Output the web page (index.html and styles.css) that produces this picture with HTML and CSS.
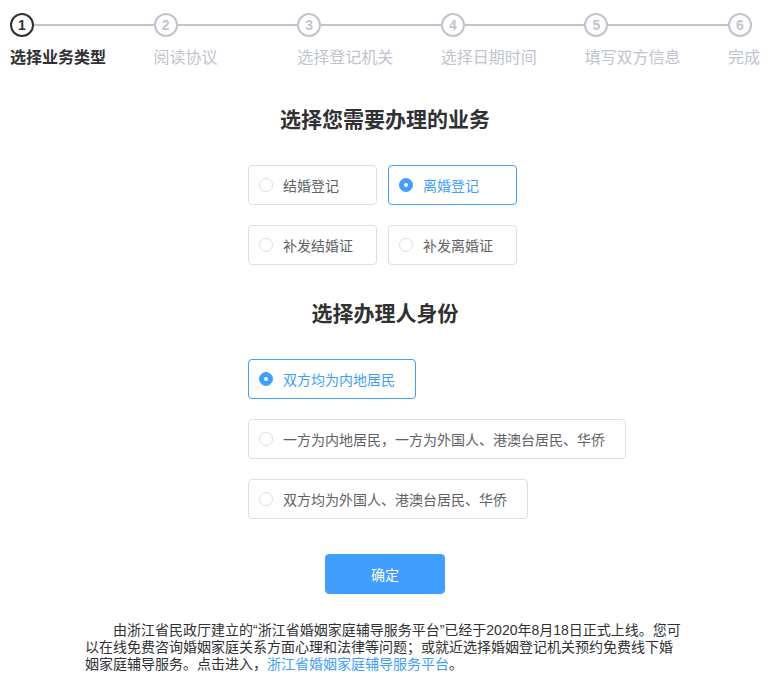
FILE: index.html
```html
<!DOCTYPE html>
<html lang="zh-CN">
<head>
<meta charset="utf-8">
<title>选择业务类型</title>
<link rel="stylesheet" href="styles.css">
</head>
<body>
<div class="steps">
  <div class="step is-process">
    <div class="step-head"><span class="step-icon">1</span><span class="step-line"></span></div>
    <div class="step-title">选择业务类型</div>
  </div>
  <div class="step">
    <div class="step-head"><span class="step-icon">2</span><span class="step-line"></span></div>
    <div class="step-title">阅读协议</div>
  </div>
  <div class="step">
    <div class="step-head"><span class="step-icon">3</span><span class="step-line"></span></div>
    <div class="step-title">选择登记机关</div>
  </div>
  <div class="step">
    <div class="step-head"><span class="step-icon">4</span><span class="step-line"></span></div>
    <div class="step-title">选择日期时间</div>
  </div>
  <div class="step">
    <div class="step-head"><span class="step-icon">5</span><span class="step-line"></span></div>
    <div class="step-title">填写双方信息</div>
  </div>
  <div class="step step-last">
    <div class="step-head"><span class="step-icon">6</span></div>
    <div class="step-title">完成</div>
  </div>
</div>

<main class="main">
  <h2 class="section-title first">选择您需要办理的业务</h2>
  <div class="options">
    <div class="grid-group">
      <label class="radio fixed"><span class="radio-input"></span><span class="radio-label">结婚登记</span></label>
      <label class="radio fixed is-checked"><span class="radio-input"></span><span class="radio-label">离婚登记</span></label>
      <label class="radio fixed"><span class="radio-input"></span><span class="radio-label">补发结婚证</span></label>
      <label class="radio fixed"><span class="radio-input"></span><span class="radio-label">补发离婚证</span></label>
    </div>
  </div>

  <h2 class="section-title second">选择办理人身份</h2>
  <div class="options">
    <div class="list-group">
      <label class="radio is-checked"><span class="radio-input"></span><span class="radio-label">双方均为内地居民</span></label>
      <label class="radio"><span class="radio-input"></span><span class="radio-label">一方为内地居民，一方为外国人、港澳台居民、华侨</span></label>
      <label class="radio"><span class="radio-input"></span><span class="radio-label">双方均为外国人、港澳台居民、华侨</span></label>
    </div>
  </div>

  <div class="actions">
    <button class="btn-primary" type="button">确定</button>
  </div>

  <p class="notice">由浙江省民政厅建立的“浙江省婚姻家庭辅导服务平台”已经于2020年8月18日正式上线。您可以在线免费咨询婚姻家庭关系方面心理和法律等问题；或就近选择婚姻登记机关预约免费线下婚姻家庭辅导服务。点击进入，<a class="link" href="#">浙江省婚姻家庭辅导服务平台</a>。</p>
</main>
</body>
</html>
```

FILE: styles.css
```css
* {
  box-sizing: border-box;
}

html, body {
  margin: 0;
  padding: 0;
  background: #ffffff;
}

body {
  font-family: "Liberation Sans", "Noto Sans CJK SC", sans-serif;
  color: #303133;
  width: 767px;
}

/* Steps */
.steps {
  display: flex;
  padding: 13px 7px 0 10px;
}

.step {
  flex: 1 1 0;
  min-width: 0;
}

.step-last {
  flex: 0 0 auto;
}

.step-head {
  display: flex;
  align-items: center;
  height: 24px;
}

.step-icon {
  flex: 0 0 auto;
  width: 24px;
  height: 24px;
  border: 2px solid #c0c4cc;
  border-radius: 50%;
  color: #c0c4cc;
  font-size: 14px;
  font-weight: 700;
  display: flex;
  align-items: center;
  justify-content: center;
  line-height: 1;
}

.step-line {
  flex: 1 1 auto;
  height: 2px;
  background: #c0c4cc;
}

.step-title {
  font-family: "Noto Sans CJK SC", sans-serif;
  font-size: 16px;
  line-height: 38px;
  color: #c0c4cc;
  white-space: nowrap;
}

.is-process .step-icon {
  border-color: #303133;
  color: #303133;
}

.is-process .step-title {
  color: #303133;
  font-weight: 700;
}

/* Main */
.main {
  padding-left: 3px;
}

.section-title {
  margin: 0;
  text-align: center;
  font-family: "Noto Sans CJK SC", sans-serif;
  font-size: 21px;
  line-height: 30px;
  font-weight: 700;
  color: #303133;
}

.section-title.first {
  margin-top: 28px;
}

.section-title.second {
  margin-top: 32px;
}

.options {
  margin-top: 32px;
  padding-left: 245px;
}

.grid-group {
  display: grid;
  grid-template-columns: 129px 129px;
  gap: 20px 11px;
}

.list-group {
  display: flex;
  flex-direction: column;
  align-items: flex-start;
  gap: 20px;
}

.radio {
  display: inline-flex;
  align-items: center;
  height: 40px;
  padding: 0 20px 0 10px;
  border: 1px solid #dcdfe6;
  border-radius: 4px;
  background: #fff;
  cursor: pointer;
  white-space: nowrap;
}

.radio.fixed {
  width: 129px;
}

.radio-input {
  flex: 0 0 auto;
  width: 14px;
  height: 14px;
  border: 1px solid #dcdfe6;
  border-radius: 50%;
  background: #fff;
  position: relative;
}

.radio-label {
  padding-left: 10px;
  font-family: "Noto Sans CJK SC", sans-serif;
  font-size: 14px;
  line-height: 1;
  color: #606266;
}

.radio.is-checked {
  border-color: #409eff;
}

.radio.is-checked .radio-input {
  border-color: #409eff;
  background: #409eff;
}

.radio.is-checked .radio-input::after {
  content: "";
  position: absolute;
  left: 50%;
  top: 50%;
  width: 4px;
  height: 4px;
  margin: -2px 0 0 -2px;
  border-radius: 50%;
  background: #fff;
}

.radio.is-checked .radio-label {
  color: #409eff;
}

.actions {
  display: flex;
  justify-content: center;
  margin-top: 35px;
}

.btn-primary {
  width: 120px;
  height: 40px;
  border: 1px solid #409eff;
  border-radius: 4px;
  background: #409eff;
  color: #fff;
  font-family: "Noto Sans CJK SC", sans-serif;
  font-size: 14px;
  padding: 0;
  cursor: pointer;
}

.notice {
  width: 600px;
  margin: 28px auto 0;
  font-size: 14px;
  line-height: 17px;
  text-indent: 2em;
  color: #303133;
}

.link {
  color: #409eff;
  text-decoration: none;
}
```
